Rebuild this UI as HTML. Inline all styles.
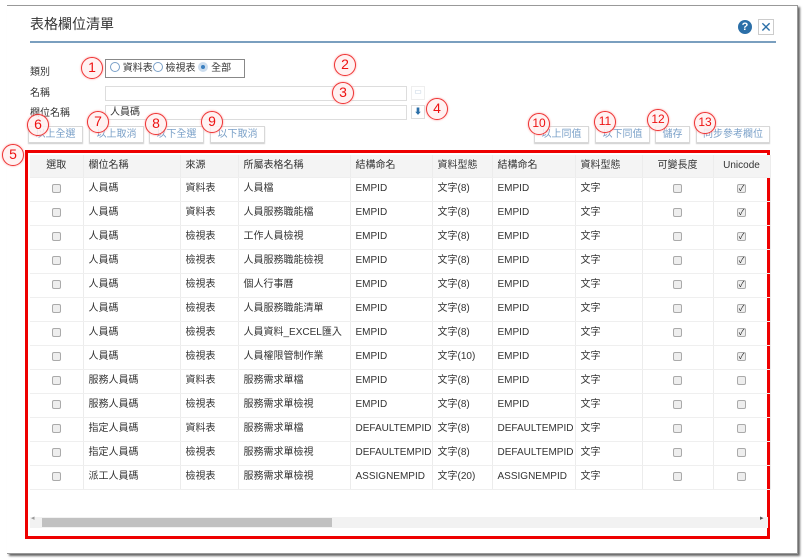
<!DOCTYPE html>
<html><head><meta charset="utf-8"><style>
*{box-sizing:border-box;margin:0;padding:0}
body{width:804px;height:560px;background:#fff;position:relative;overflow:hidden;font-family:"Liberation Sans","Noto Sans CJK TC",sans-serif;font-size:10px;color:#333}
.panel{position:absolute;left:7px;top:5px;width:791px;height:549px;border:1px solid #999;border-left:none;box-shadow:2px 2px 2px #666}
.abs{position:absolute}
.title{left:30px;top:14px;font-size:14px;color:#333}
.line{left:30px;top:41px;width:746px;height:2px;background:#7a9fbf}
.lbl{font-size:10px;color:#333}
.inp{border:1px solid #ddd;background:#fff;height:15px}
.btn{border:1px solid #d8d8d8;background:#fff;box-shadow:0 1px 1px #ccc;height:17px;text-align:center;line-height:15px;color:#7aa0c8;font-size:10px}
.circ{width:22px;height:22px;border:1.5px solid #e33;border-radius:50%;background:rgba(255,240,240,.85);color:#e11;font-size:14px;text-align:center;line-height:19px;box-shadow:0 0 2px #f99}
.red{left:25px;top:150px;width:745px;height:389px;border:3px solid #e00}
table{position:absolute;left:30px;top:155px;border-collapse:collapse;table-layout:fixed}
td{height:24px;line-height:14px;vertical-align:middle;border-right:1px solid #ececec;border-bottom:1px solid #efefef;padding:0 0 0 5px;font-size:10px;color:#333;white-space:nowrap;overflow:hidden}
tr.h td{height:22px;background:#f4f4f4}
.cb{display:inline-block;width:9px;height:9px;border:1px solid #aaa;border-radius:2px;background:#eee;vertical-align:middle}
.ck{display:inline-block;width:9px;height:9px;border:1px solid #aaa;border-radius:2px;background:#eee;vertical-align:middle;font-size:8px;line-height:7px;text-align:center;color:#222}
.c{text-align:center;padding-left:0}
</style></head><body>
<div class="panel"></div>
<div class="abs title">表格欄位清單</div>
<div class="abs line"></div>
<div class="abs" style="left:738px;top:20px;width:14px;height:14px;border-radius:50%;background:#2b6fa8;color:#fff;font-weight:bold;font-size:11px;text-align:center;line-height:14px">?</div>
<div class="abs" style="left:758px;top:19px;width:16px;height:16px;border:1px solid #ccc;color:#2b6fa8;font-size:14px;text-align:center;line-height:14px">✕</div>
<div class="abs lbl" style="left:30px;top:63px">類別</div>
<div class="abs lbl" style="left:30px;top:84px">名稱</div>
<div class="abs lbl" style="left:30px;top:104px">欄位名稱</div>
<div class="abs" style="left:105px;top:59px;width:140px;height:19px;border:1px solid #888;font-size:10px;line-height:17px;padding-left:4px">
<span style="display:inline-block;width:10px;height:10px;border:1px solid #7aa0c8;border-radius:50%;vertical-align:-1px"></span> 資料表<span style="display:inline-block;width:10px;height:10px;border:1px solid #7aa0c8;border-radius:50%;vertical-align:-1px"></span> 檢視表 <span style="display:inline-block;width:10px;height:10px;border:3px solid #cde;background:#3a7fc0;border-radius:50%;vertical-align:-1px"></span> 全部</div>
<div class="abs inp" style="left:105px;top:86px;width:302px"></div>
<div class="abs inp" style="left:105px;top:105px;width:302px;font-size:10px;padding-left:4px;line-height:13px">人員碼</div>
<div class="abs" style="left:411px;top:86px;width:14px;height:14px;border:1px solid #eee;color:#bcd;font-size:8px;text-align:center">▭</div>
<div class="abs" style="left:411px;top:105px;width:14px;height:14px;border:1px solid #ddd;color:#2b6fa8;font-size:8px;text-align:center;line-height:12px">⬇</div>
<div class="abs btn" style="left:28px;top:126px;width:55px">以上全選</div>
<div class="abs btn" style="left:89px;top:126px;width:55px">以上取消</div>
<div class="abs btn" style="left:149px;top:126px;width:55px">以下全選</div>
<div class="abs btn" style="left:210px;top:126px;width:55px">以下取消</div>
<div class="abs btn" style="left:534px;top:126px;width:55px">以上同值</div>
<div class="abs btn" style="left:595px;top:126px;width:55px">以下同值</div>
<div class="abs btn" style="left:655px;top:126px;width:35px">儲存</div>
<div class="abs btn" style="left:696px;top:126px;width:74px">同步參考欄位</div>
<div class="abs red"></div>
<table>
<colgroup><col style="width:53px"><col style="width:97px"><col style="width:58px"><col style="width:112px"><col style="width:82px"><col style="width:60px"><col style="width:83px"><col style="width:67px"><col style="width:71px"><col style="width:57px"></colgroup>
<tr class="h"><td class="c">選取</td><td>欄位名稱</td><td>來源</td><td>所屬表格名稱</td><td>結構命名</td><td>資料型態</td><td>結構命名</td><td>資料型態</td><td class="c">可變長度</td><td class="c">Unicode</td></tr>
<tr><td class="c"><span class="cb"></span></td><td>人員碼</td><td>資料表</td><td>人員檔</td><td>EMPID</td><td>文字(8)</td><td>EMPID</td><td>文字</td><td class="c"><span class="cb"></span></td><td class="c"><span class="ck">✓</span></td></tr>
<tr><td class="c"><span class="cb"></span></td><td>人員碼</td><td>資料表</td><td>人員服務職能檔</td><td>EMPID</td><td>文字(8)</td><td>EMPID</td><td>文字</td><td class="c"><span class="cb"></span></td><td class="c"><span class="ck">✓</span></td></tr>
<tr><td class="c"><span class="cb"></span></td><td>人員碼</td><td>檢視表</td><td>工作人員檢視</td><td>EMPID</td><td>文字(8)</td><td>EMPID</td><td>文字</td><td class="c"><span class="cb"></span></td><td class="c"><span class="ck">✓</span></td></tr>
<tr><td class="c"><span class="cb"></span></td><td>人員碼</td><td>檢視表</td><td>人員服務職能檢視</td><td>EMPID</td><td>文字(8)</td><td>EMPID</td><td>文字</td><td class="c"><span class="cb"></span></td><td class="c"><span class="ck">✓</span></td></tr>
<tr><td class="c"><span class="cb"></span></td><td>人員碼</td><td>檢視表</td><td>個人行事曆</td><td>EMPID</td><td>文字(8)</td><td>EMPID</td><td>文字</td><td class="c"><span class="cb"></span></td><td class="c"><span class="ck">✓</span></td></tr>
<tr><td class="c"><span class="cb"></span></td><td>人員碼</td><td>檢視表</td><td>人員服務職能清單</td><td>EMPID</td><td>文字(8)</td><td>EMPID</td><td>文字</td><td class="c"><span class="cb"></span></td><td class="c"><span class="ck">✓</span></td></tr>
<tr><td class="c"><span class="cb"></span></td><td>人員碼</td><td>檢視表</td><td>人員資料_EXCEL匯入</td><td>EMPID</td><td>文字(8)</td><td>EMPID</td><td>文字</td><td class="c"><span class="cb"></span></td><td class="c"><span class="ck">✓</span></td></tr>
<tr><td class="c"><span class="cb"></span></td><td>人員碼</td><td>檢視表</td><td>人員權限管制作業</td><td>EMPID</td><td>文字(10)</td><td>EMPID</td><td>文字</td><td class="c"><span class="cb"></span></td><td class="c"><span class="ck">✓</span></td></tr>
<tr><td class="c"><span class="cb"></span></td><td>服務人員碼</td><td>資料表</td><td>服務需求單檔</td><td>EMPID</td><td>文字(8)</td><td>EMPID</td><td>文字</td><td class="c"><span class="cb"></span></td><td class="c"><span class="cb"></span></td></tr>
<tr><td class="c"><span class="cb"></span></td><td>服務人員碼</td><td>檢視表</td><td>服務需求單檢視</td><td>EMPID</td><td>文字(8)</td><td>EMPID</td><td>文字</td><td class="c"><span class="cb"></span></td><td class="c"><span class="cb"></span></td></tr>
<tr><td class="c"><span class="cb"></span></td><td>指定人員碼</td><td>資料表</td><td>服務需求單檔</td><td>DEFAULTEMPID</td><td>文字(8)</td><td>DEFAULTEMPID</td><td>文字</td><td class="c"><span class="cb"></span></td><td class="c"><span class="cb"></span></td></tr>
<tr><td class="c"><span class="cb"></span></td><td>指定人員碼</td><td>檢視表</td><td>服務需求單檢視</td><td>DEFAULTEMPID</td><td>文字(8)</td><td>DEFAULTEMPID</td><td>文字</td><td class="c"><span class="cb"></span></td><td class="c"><span class="cb"></span></td></tr>
<tr><td class="c"><span class="cb"></span></td><td>派工人員碼</td><td>檢視表</td><td>服務需求單檢視</td><td>ASSIGNEMPID</td><td>文字(20)</td><td>ASSIGNEMPID</td><td>文字</td><td class="c"><span class="cb"></span></td><td class="c"><span class="cb"></span></td></tr>
</table>
<div class="abs" style="left:30px;top:517px;width:738px;height:11px;background:#f2f2f2"></div>
<div class="abs" style="left:42px;top:518px;width:290px;height:9px;background:#c1c1c1"></div>
<div class="abs" style="left:31px;top:514px;font-size:7px;color:#999">◂</div>
<div class="abs" style="left:760px;top:514px;font-size:7px;color:#555">▸</div>
<div class="abs circ" style="left:81px;top:57px">1</div>
<div class="abs circ" style="left:334px;top:54px">2</div>
<div class="abs circ" style="left:332px;top:82px">3</div>
<div class="abs circ" style="left:426px;top:98px">4</div>
<div class="abs circ" style="left:2px;top:144px">5</div>
<div class="abs circ" style="left:27px;top:114px">6</div>
<div class="abs circ" style="left:87px;top:111px">7</div>
<div class="abs circ" style="left:145px;top:113px">8</div>
<div class="abs circ" style="left:201px;top:111px">9</div>
<div class="abs circ" style="left:528px;top:113px;font-size:12px">10</div>
<div class="abs circ" style="left:594px;top:111px;font-size:12px">11</div>
<div class="abs circ" style="left:647px;top:109px;font-size:12px">12</div>
<div class="abs circ" style="left:694px;top:112px;font-size:12px">13</div>
</body></html>
